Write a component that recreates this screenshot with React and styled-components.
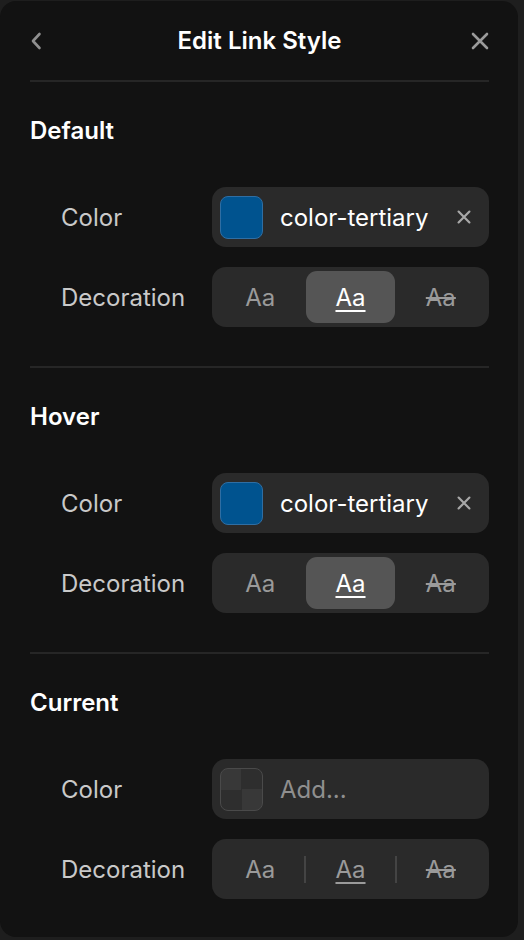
import React, { useState } from "react";
import styled, { createGlobalStyle } from "styled-components";

const GlobalStyle = createGlobalStyle`
  html, body {
    margin: 0;
    padding: 0;
    background: #1e1e1e;
  }
  body {
    font-family: Inter, "Noto Sans", sans-serif;
    -webkit-font-smoothing: antialiased;
  }
`;

const sections = [
  { title: "Default", color: "color-tertiary", decoration: "underline" },
  { title: "Hover", color: "color-tertiary", decoration: "underline" },
  { title: "Current", color: null, decoration: null },
];

const decorations = ["none", "underline", "line-through"];

const BackIcon = () => (
  <svg width="12" height="18" viewBox="0 0 12 18" fill="none">
    <path
      d="M9.5 2 L3 9 L9.5 16"
      stroke="#8f8f8f"
      strokeWidth="2.6"
      strokeLinecap="round"
      strokeLinejoin="round"
    />
  </svg>
);

const CloseIcon = ({ size = 18, color = "#9a9a9a", stroke = 2.6 }) => (
  <svg width={size} height={size} viewBox="0 0 18 18" fill="none">
    <path
      d="M2 2 L16 16 M16 2 L2 16"
      stroke={color}
      strokeWidth={stroke}
      strokeLinecap="round"
    />
  </svg>
);

const Panel = styled.div`
  width: 518px;
  height: 936px;
  margin-top: 1px;
  background: #121212;
  border-radius: 16px;
  padding: 0 29px 0 30px;
  box-sizing: border-box;
  overflow: hidden;
`;

const Header = styled.header`
  height: 81px;
  display: grid;
  grid-template-columns: 40px 1fr 40px;
  align-items: center;
  border-bottom: 2px solid #262626;
  box-sizing: border-box;
`;

const IconButton = styled.button`
  background: none;
  border: 0;
  padding: 0;
  display: flex;
  align-items: center;
  justify-content: ${(p) => (p.$end ? "flex-end" : "flex-start")};
  cursor: pointer;
`;

const Title = styled.h1`
  margin: 0;
  text-align: center;
  color: #ffffff;
  font-size: 24px;
  font-weight: 600;
`;

const Section = styled.section`
  padding: 35px 0 39px;
  border-bottom: ${(p) => (p.$last ? "none" : "2px solid #262626")};
`;

const SectionTitle = styled.h2`
  margin: 0 0 42px;
  color: #ffffff;
  font-size: 24px;
  line-height: 28px;
  font-weight: 600;
`;

const Rows = styled.div`
  display: flex;
  flex-direction: column;
  gap: 20px;
`;

const Row = styled.div`
  display: grid;
  grid-template-columns: 151px 1fr;
  align-items: center;
  padding-left: 31px;
`;

const Label = styled.span`
  color: #c9c9c9;
  font-size: 24px;
  font-weight: 400;
`;

const Control = styled.div`
  height: 60px;
  background: #2a2a2a;
  border-radius: 14px;
  box-sizing: border-box;
  padding: 4px;
  display: flex;
  align-items: center;
`;

const Swatch = styled.div`
  width: 43px;
  height: 43px;
  margin-left: 4px;
  border-radius: 8px;
  box-sizing: border-box;
  border: 1.5px solid ${(p) => (p.$empty ? "#4a4a4a" : "#2f6ea3")};
  background: ${(p) =>
    p.$empty
      ? "conic-gradient(#2e2e2e 0 25%, #383838 0 50%, #2e2e2e 0 75%, #383838 0)"
      : "#00538f"};
  flex: none;
`;

const ColorName = styled.span`
  flex: 1;
  margin-left: 17px;
  color: ${(p) => (p.$placeholder ? "#8f8f8f" : "#ffffff")};
  font-size: 24px;
`;

const Clear = styled.button`
  background: none;
  border: 0;
  padding: 0;
  margin-right: 14px;
  display: flex;
  cursor: pointer;
`;

const Segment = styled.button`
  flex: 1;
  height: 52px;
  border: 0;
  border-radius: 11px;
  background: ${(p) => (p.$active ? "#555555" : "transparent")};
  color: ${(p) => (p.$active ? "#ffffff" : "#9a9a9a")};
  font-family: inherit;
  font-size: 24px;
  text-decoration: ${(p) => p.$decoration};
  text-decoration-thickness: 2px;
  text-underline-offset: 4px;
  cursor: pointer;
`;

const Divider = styled.span`
  width: 2px;
  height: 27px;
  background: #444444;
  flex: none;
  visibility: ${(p) => (p.$hidden ? "hidden" : "visible")};
`;

const ColorRow = ({ color }) => (
  <Row>
    <Label>Color</Label>
    <Control>
      <Swatch $empty={!color} />
      <ColorName $placeholder={!color}>{color || "Add..."}</ColorName>
      {color && (
        <Clear aria-label="Clear color">
          <CloseIcon size={14} color="#a8a8a8" stroke={2.8} />
        </Clear>
      )}
    </Control>
  </Row>
);

const DecorationRow = ({ value, onChange }) => (
  <Row>
    <Label>Decoration</Label>
    <Control>
      {decorations.map((d, i) => (
        <React.Fragment key={d}>
          {i > 0 && <Divider $hidden={value !== null} />}
          <Segment
            $active={value === d}
            $decoration={d}
            onClick={() => onChange(d)}
          >
            Aa
          </Segment>
        </React.Fragment>
      ))}
    </Control>
  </Row>
);

const App = () => {
  const [state, setState] = useState(sections);

  const setDecoration = (idx, d) =>
    setState((s) => s.map((x, i) => (i === idx ? { ...x, decoration: d } : x)));

  return (
    <>
      <GlobalStyle />
      <Panel>
        <Header>
          <IconButton aria-label="Back">
            <BackIcon />
          </IconButton>
          <Title>Edit Link Style</Title>
          <IconButton $end aria-label="Close">
            <CloseIcon />
          </IconButton>
        </Header>

        {state.map((s, i) => (
          <Section key={s.title} $last={i === state.length - 1}>
            <SectionTitle>{s.title}</SectionTitle>
            <Rows>
              <ColorRow color={s.color} />
              <DecorationRow
                value={s.decoration}
                onChange={(d) => setDecoration(i, d)}
              />
            </Rows>
          </Section>
        ))}
      </Panel>
    </>
  );
};

export default App;
